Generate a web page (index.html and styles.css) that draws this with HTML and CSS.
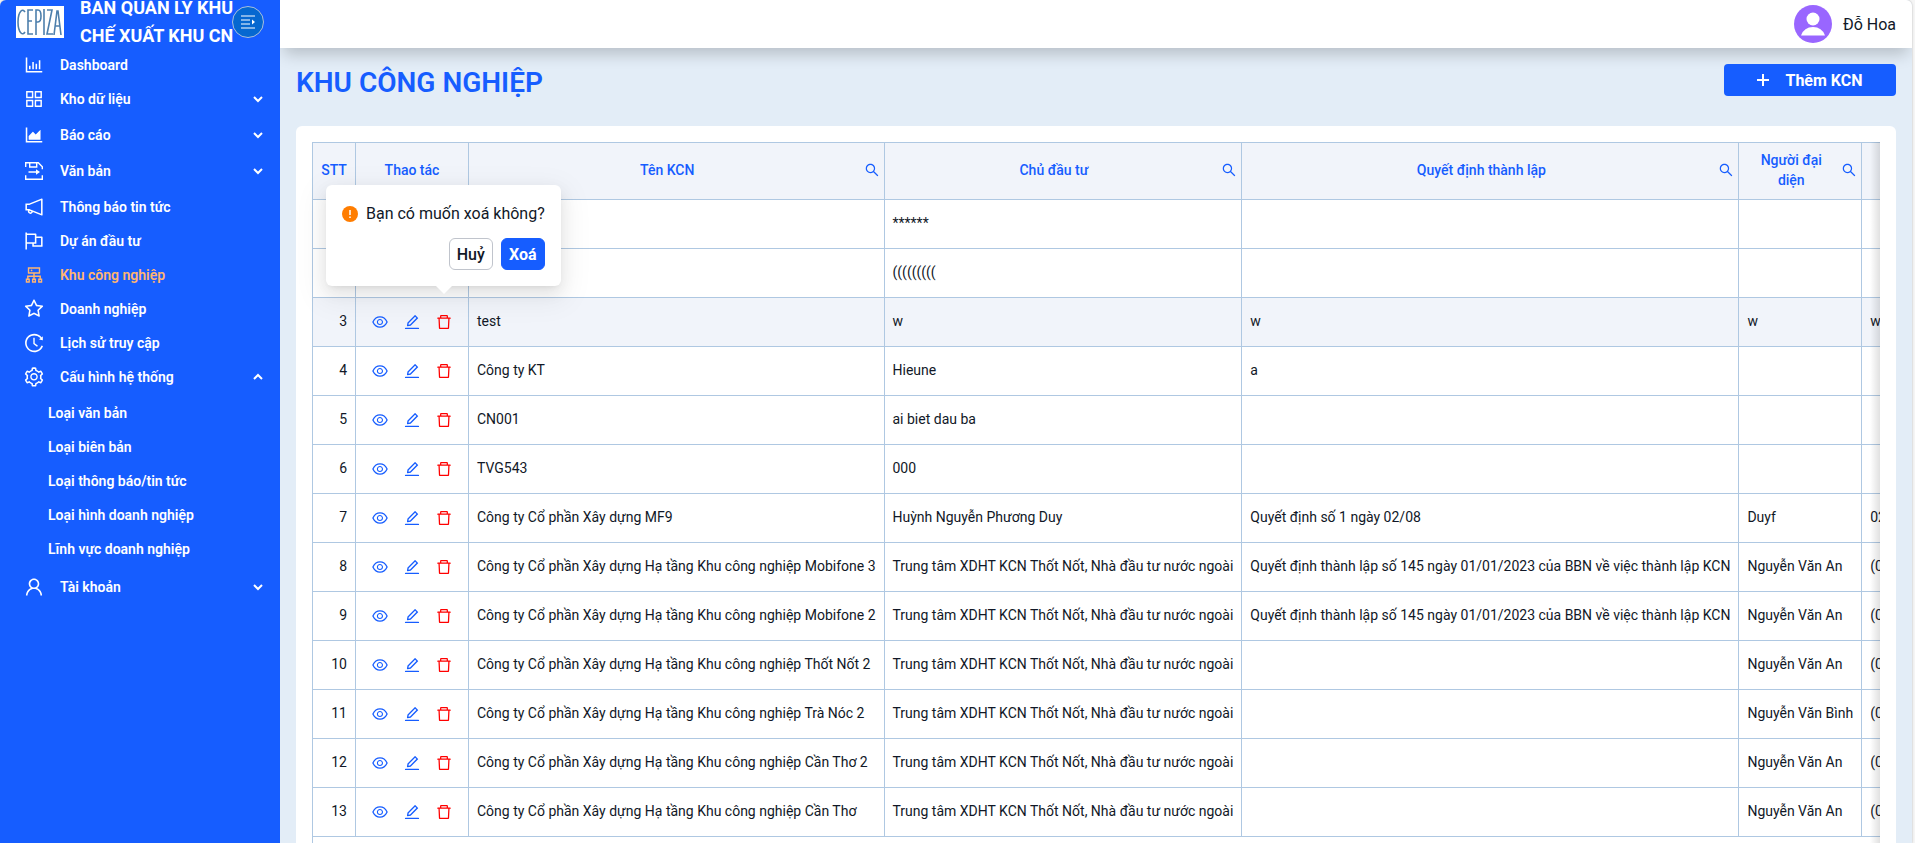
FILE: index.html
```
<!DOCTYPE html>
<html lang="vi">
<head>
    <meta charset="UTF-8">
    <meta name="viewport" content="width=device-width, initial-scale=1.0">
    <title>Khu công nghiệp</title>
    <link rel="stylesheet" href="styles.css">
</head>
<body>
    <!-- Icon set -->
    <svg class="sprite" aria-hidden="true">
        <symbol id="i-bar" viewBox="0 0 1024 1024"><path d="M888 792H200V168c0-4.400-3.600-8-8-8h-56c-4.400 0-8 3.600-8 8v688c0 4.400 3.600 8 8 8h752c4.400 0 8-3.600 8-8v-56c0-4.400-3.600-8-8-8zm-600-80h56c4.400 0 8-3.600 8-8V560c0-4.400-3.600-8-8-8h-56c-4.400 0-8 3.600-8 8v144c0 4.400 3.600 8 8 8zm152 0h56c4.400 0 8-3.600 8-8V384c0-4.400-3.600-8-8-8h-56c-4.400 0-8 3.600-8 8v320c0 4.400 3.600 8 8 8zm152 0h56c4.400 0 8-3.600 8-8V462c0-4.400-3.600-8-8-8h-56c-4.400 0-8 3.600-8 8v242c0 4.400 3.600 8 8 8zm152 0h56c4.400 0 8-3.600 8-8V304c0-4.400-3.600-8-8-8h-56c-4.400 0-8 3.600-8 8v400c0 4.400 3.600 8 8 8z"/></symbol>
        <symbol id="i-grid" viewBox="0 0 1024 1024"><path fill-rule="evenodd" d="M464 144H160c-8.800 0-16 7.200-16 16v304c0 8.800 7.200 16 16 16h304c8.800 0 16-7.200 16-16V160c0-8.800-7.200-16-16-16zm-52 268H212V212h200v200zm452-268H560c-8.800 0-16 7.200-16 16v304c0 8.800 7.200 16 16 16h304c8.800 0 16-7.200 16-16V160c0-8.800-7.200-16-16-16zm-52 268H612V212h200v200zM464 544H160c-8.800 0-16 7.200-16 16v304c0 8.800 7.200 16 16 16h304c8.800 0 16-7.200 16-16V560c0-8.800-7.200-16-16-16zm-52 268H212V612h200v200zm452-268H560c-8.800 0-16 7.200-16 16v304c0 8.800 7.200 16 16 16h304c8.800 0 16-7.200 16-16V560c0-8.800-7.200-16-16-16zm-52 268H612V612h200v200z"/></symbol>
        <symbol id="i-area" viewBox="0 0 1024 1024"><path d="M888 792H200V168c0-4.400-3.600-8-8-8h-56c-4.400 0-8 3.600-8 8v688c0 4.400 3.600 8 8 8h752c4.400 0 8-3.600 8-8v-56c0-4.400-3.600-8-8-8zm-616-64h536c4.400 0 8-3.600 8-8V284c0-7.200-8.700-10.700-13.700-5.700L592 488.600l-125.400-124a8.030 8.030 0 0 0-11.300 0l-189 189.600a7.870 7.870 0 0 0-2.300 5.600V720c0 4.400 3.600 8 8 8z"/></symbol>
        <symbol id="i-doc" viewBox="-1 -1 22 22"><g fill="none" stroke="currentColor" stroke-width="1.400"><path d="M1.700 6V1.700h12.600l4 4v2.600M1.700 14.300v4h16.600v-4M5.700 1.700v4.300h7V1.700"/><path d="M4.500 11h8"/></g><path d="M12 8.300l4 2.700-4 2.700z"/></symbol>
        <symbol id="i-horn" viewBox="0 0 1024 1024"><path fill-rule="evenodd" d="M880 112c-3.800 0-7.700.7-11.600 2.300L292 345.900H128c-8.800 0-16 7.400-16 16.600v299c0 9.200 7.200 16.600 16 16.600h101.700c-3.700 11.600-5.700 23.900-5.700 36.400 0 65.900 53.800 119.500 120 119.500 55.400 0 102.100-37.600 115.900-88.400l408.600 164.200c3.900 1.500 7.800 2.300 11.600 2.300 16.900 0 32-14.200 32-33.200V145.200C912 126.200 897 112 880 112zM344 762.300c-26.500 0-48-21.400-48-47.800 0-11.200 3.900-21.900 11-30.400l84.900 34.100c-2 24.600-22.700 44.100-47.900 44.100zm496 58.400L318.800 611.300l-12.900-5.200H184V417.900h121.900l12.900-5.200L840 203.300v617.400z"/></symbol>
        <symbol id="i-flag" viewBox="0 0 1024 1024"><path fill-rule="evenodd" d="M880 305H624V192c0-17.700-14.300-32-32-32H184v-40c0-4.400-3.600-8-8-8h-56c-4.400 0-8 3.600-8 8v784c0 4.400 3.600 8 8 8h56c4.400 0 8-3.600 8-8V640h248v113c0 17.700 14.300 32 32 32h416c17.700 0 32-14.300 32-32V337c0-17.700-14.300-32-32-32zM184 568V232h368v336H184zm656 145H504v-73h112c4.400 0 8-3.600 8-8V377h216v336z"/></symbol>
        <symbol id="i-cluster" viewBox="0 0 1024 1024"><path fill-rule="evenodd" d="M888 680h-54V540H546v-92h238c8.800 0 16-7.200 16-16V168c0-8.800-7.200-16-16-16H240c-8.800 0-16 7.200-16 16v264c0 8.800 7.200 16 16 16h238v92H190v140h-54c-4.400 0-8 3.600-8 8v176c0 4.400 3.600 8 8 8h176c4.400 0 8-3.600 8-8V688c0-4.400-3.600-8-8-8h-54v-72h220v72h-54c-4.400 0-8 3.600-8 8v176c0 4.400 3.600 8 8 8h176c4.400 0 8-3.600 8-8V688c0-4.400-3.600-8-8-8h-54v-72h220v72h-54c-4.400 0-8 3.600-8 8v176c0 4.400 3.600 8 8 8h176c4.400 0 8-3.600 8-8V688c0-4.400-3.600-8-8-8zM256 805.300c0 1.500-1.200 2.700-2.700 2.700h-58.700c-1.500 0-2.700-1.200-2.700-2.700v-58.700c0-1.500 1.200-2.700 2.700-2.700h58.700c1.500 0 2.700 1.200 2.700 2.700v58.700zm288 0c0 1.500-1.200 2.700-2.700 2.700h-58.700c-1.500 0-2.700-1.200-2.700-2.700v-58.700c0-1.500 1.200-2.700 2.700-2.700h58.700c1.500 0 2.700 1.200 2.700 2.700v58.700zM288 384V216h448v168H288zm544 421.300c0 1.500-1.200 2.700-2.700 2.700h-58.700c-1.500 0-2.700-1.200-2.700-2.700v-58.700c0-1.500 1.200-2.700 2.700-2.700h58.700c1.500 0 2.700 1.200 2.700 2.700v58.700zM360 300a40 40 0 1 0 80 0 40 40 0 1 0-80 0z"/></symbol>
        <symbol id="i-star" viewBox="0 0 1024 1024"><path fill-rule="evenodd" d="M908.100 353.100l-253.900-36.900L540.700 86.100c-3.100-6.300-8.200-11.400-14.500-14.500-15.800-7.800-35-1.300-42.900 14.500L369.800 316.200l-253.900 36.900c-7 1-13.400 4.300-18.300 9.300a32.050 32.050 0 0 0 .6 45.300l183.700 179.100-43.400 252.900a31.950 31.950 0 0 0 46.400 33.700L512 754l227.100 119.400c6.200 3.300 13.400 4.400 20.300 3.200 17.400-3 29.100-19.500 26.100-36.900l-43.400-252.900 183.700-179.100c5-4.900 8.300-11.300 9.300-18.300 2.700-17.500-9.500-33.700-27-36.300zM664.800 561.600l36.100 210.300L512 672.700 323.100 772l36.100-210.300-152.800-149L417.600 382 512 190.700 606.400 382l211.200 30.700-152.800 148.900z"/></symbol>
        <symbol id="i-history" viewBox="0 0 1024 1024"><path d="M536.100 273H488c-4.400 0-8 3.600-8 8v275.300c0 2.600 1.200 5 3.300 6.500l165.300 120.700c3.600 2.600 8.600 1.900 11.200-1.700l28.600-39c2.700-3.700 1.900-8.700-1.700-11.200L544.100 528.500V281c0-4.400-3.600-8-8-8zm219.800 75.200l156.800 38.300c5 1.200 9.900-2.600 9.900-7.700l.8-161.500c0-6.700-7.700-10.500-12.900-6.300L752.900 334.100a8 8 0 0 0 3 14.100zm167.700 301.100l-56.700-19.500a8 8 0 0 0-10.100 4.800c-1.900 5.100-3.900 10.100-6 15.100-17.800 42.100-43.300 80-75.900 112.500a353 353 0 0 1-112.500 75.900 352.180 352.180 0 0 1-137.700 27.800c-47.800 0-94.100-9.300-137.700-27.800a353 353 0 0 1-112.500-75.900c-32.500-32.500-58-70.400-75.900-112.500A353.440 353.440 0 0 1 171 512c0-47.800 9.300-94.200 27.800-137.800 17.800-42.100 43.300-80 75.900-112.500a353 353 0 0 1 112.500-75.900C430.600 167.300 477 158 524.800 158s94.100 9.300 137.700 27.800A353 353 0 0 1 775 261.700c10.200 10.300 19.800 21 28.600 32.300l59.800-46.800C784.700 146.600 662.200 81.900 524.600 82 285 82.100 92.600 276.700 95 516.400 97.400 751.900 288.900 942 524.800 942c185.500 0 343.500-117.600 403.700-282.300 1.500-4.200-.7-8.900-4.900-10.400z"/></symbol>
        <symbol id="i-gear" viewBox="0 0 1024 1024"><path fill-rule="evenodd" d="M924.800 625.700l-65.500-56c3.100-19 4.700-38.400 4.700-57.800s-1.600-38.800-4.700-57.800l65.500-56a32.030 32.030 0 0 0 9.300-35.200l-.9-2.600a443.740 443.740 0 0 0-79.700-137.900l-1.800-2.100a32.120 32.120 0 0 0-35.100-9.500l-81.300 28.900c-30-24.600-63.500-44-99.700-57.600l-15.700-85a32.050 32.050 0 0 0-25.800-25.700l-2.700-.5c-52.100-9.400-106.900-9.400-159 0l-2.700.5a32.050 32.050 0 0 0-25.800 25.700l-15.800 85.400a351.860 351.860 0 0 0-99 57.400l-81.900-29.100a32 32 0 0 0-35.100 9.500l-1.800 2.100a446.020 446.020 0 0 0-79.700 137.900l-.9 2.600c-4.500 12.500-.8 26.500 9.300 35.200l66.300 56.600c-3.100 18.800-4.600 38-4.600 57.100 0 19.200 1.500 38.400 4.600 57.100L99 625.500a32.030 32.030 0 0 0-9.300 35.200l.9 2.600c18.100 50.400 44.900 96.900 79.700 137.900l1.800 2.100a32.120 32.120 0 0 0 35.100 9.500l81.900-29.100c29.800 24.500 63.100 43.900 99 57.400l15.800 85.400a32.050 32.050 0 0 0 25.800 25.700l2.700.5a449.400 449.400 0 0 0 159 0l2.700-.5a32.050 32.050 0 0 0 25.800-25.700l15.700-85a350 350 0 0 0 99.700-57.600l81.300 28.900a32 32 0 0 0 35.100-9.500l1.800-2.100c34.800-41.100 61.600-87.500 79.700-137.900l.9-2.600c4.500-12.300.8-26.300-9.300-35zM788.300 465.900c2.500 15.100 3.800 30.600 3.800 46.100s-1.300 31-3.800 46.100l-6.600 40.100 74.700 63.900a370.030 370.030 0 0 1-42.600 73.600L721 702.800l-31.400 25.800c-23.900 19.600-50.500 35-79.300 45.800l-38.100 14.300-17.900 97a377.500 377.500 0 0 1-85 0l-17.900-97.200-37.800-14.500c-28.500-10.800-55-26.200-78.700-45.700l-31.400-25.900-93.400 33.200c-17-22.900-31.200-47.600-42.600-73.600l75.500-64.500-6.500-40c-2.400-14.900-3.700-30.300-3.700-45.500 0-15.300 1.200-30.600 3.700-45.500l6.500-40-75.500-64.500c11.300-26.100 25.600-50.700 42.600-73.600l93.400 33.200 31.400-25.900c23.700-19.500 50.200-34.900 78.700-45.700l37.900-14.300 17.900-97.200c28.100-3.200 56.800-3.200 85 0l17.900 97 38.100 14.300c28.700 10.800 55.400 26.200 79.300 45.800l31.400 25.800 92.800-32.900c17 22.900 31.200 47.600 42.600 73.600L781.800 426l6.500 39.900zM512 326c-97.200 0-176 78.800-176 176s78.800 176 176 176 176-78.800 176-176-78.800-176-176-176zm79.200 255.200A111.600 111.600 0 0 1 512 614c-29.900 0-58-11.700-79.200-32.800A111.600 111.600 0 0 1 400 502c0-29.900 11.700-58 32.800-79.200C454 401.600 482.100 390 512 390c29.900 0 58 11.600 79.200 32.800A111.600 111.600 0 0 1 624 502c0 29.900-11.700 58-32.800 79.200z"/></symbol>
        <symbol id="i-user" viewBox="0 0 1024 1024"><path fill-rule="evenodd" d="M858.500 763.600a374 374 0 0 0-80.600-119.500 375.630 375.630 0 0 0-119.500-80.600c-.4-.2-.8-.3-1.200-.5C719.500 518 760 444.700 760 362c0-137-111-248-248-248S264 225 264 362c0 82.700 40.500 156 102.800 201.100-.4.200-.8.300-1.200.5-44.800 18.900-85 46-119.500 80.600a375.630 375.630 0 0 0-80.600 119.500A371.700 371.700 0 0 0 136 901.800a8 8 0 0 0 8 8.200h60c4.400 0 7.900-3.500 8-7.800 2-77.200 33-149.500 87.800-204.300 56.700-56.700 132-87.900 212.200-87.900s155.500 31.200 212.200 87.900C779 752.700 810 825 812 902.200c.1 4.400 3.600 7.800 8 7.800h60a8 8 0 0 0 8-8.200c-1-47.800-10.900-94.300-29.500-138.200zM512 534c-45.900 0-89.100-17.900-121.600-50.400S340 407.900 340 362c0-45.900 17.900-89.100 50.400-121.600S466.100 190 512 190s89.100 17.900 121.600 50.400S684 316.100 684 362c0 45.900-17.900 89.100-50.400 121.600S557.900 534 512 534z"/></symbol>
        <symbol id="i-down" viewBox="0 0 10 10"><path d="M1 3l4 4 4-4" fill="none" stroke="currentColor" stroke-width="2"/></symbol>
        <symbol id="i-up" viewBox="0 0 10 10"><path d="M1 7l4-4 4 4" fill="none" stroke="currentColor" stroke-width="2"/></symbol>
        <symbol id="i-search" viewBox="0 0 1024 1024"><path fill-rule="evenodd" d="M909.600 854.500L649.900 594.800C690.200 542.700 712 479 712 412c0-80.200-31.300-155.400-87.900-212.100-56.600-56.700-132-87.900-212.100-87.900s-155.500 31.300-212.100 87.900C143.200 256.500 112 331.800 112 412c0 80.100 31.300 155.500 87.900 212.100C256.500 680.800 331.800 712 412 712c67 0 130.600-21.800 182.700-62l259.700 259.600a8.200 8.200 0 0 0 11.600 0l43.600-43.500a8.200 8.200 0 0 0 0-11.600zM570.400 570.400C528 612.700 471.800 636 412 636s-116-23.300-158.400-65.600C211.300 528 188 471.800 188 412s23.300-116.100 65.600-158.400C296 211.300 352.200 188 412 188s116.100 23.200 158.400 65.600S636 352.200 636 412s-23.300 116.100-65.600 158.400z"/></symbol>
        <symbol id="i-eye" viewBox="0 0 1024 1024"><path fill-rule="evenodd" d="M942.200 486.200C847.400 286.500 704.100 186 512 186c-192.200 0-335.400 100.500-430.200 300.300a60.300 60.300 0 0 0 0 51.500C176.600 737.500 319.900 838 512 838c192.200 0 335.400-100.500 430.200-300.300 7.700-16.200 7.700-35 0-51.500zM512 766c-161.300 0-279.400-81.800-362.700-254C232.600 339.800 350.700 258 512 258c161.300 0 279.400 81.800 362.700 254C791.500 684.200 673.400 766 512 766zm-4-430c-97.200 0-176 78.800-176 176s78.800 176 176 176 176-78.800 176-176-78.800-176-176-176zm0 288c-61.900 0-112-50.100-112-112s50.100-112 112-112 112 50.100 112 112-50.100 112-112 112z"/></symbol>
        <symbol id="i-edit" viewBox="0 0 1024 1024"><path fill-rule="evenodd" d="M257.700 752c2 0 4-.2 6-.5L431.900 722c2-.4 3.900-1.300 5.300-2.800l423.900-423.900a9.960 9.960 0 0 0 0-14.100L694.900 114.900c-1.900-1.900-4.400-2.900-7.100-2.900s-5.200 1-7.100 2.900L256.800 538.800c-1.500 1.500-2.400 3.300-2.800 5.300l-29.500 168.200a33.500 33.500 0 0 0 9.400 29.800c6.600 6.400 14.900 9.900 23.800 9.900zm67.400-174.400L687.800 215l73.300 73.300-362.700 362.600-88.900 15.700 15.600-89zM880 836H144c-17.700 0-32 14.300-32 32v36c0 4.400 3.600 8 8 8h784c4.400 0 8-3.600 8-8v-36c0-17.700-14.300-32-32-32z"/></symbol>
        <symbol id="i-trash" viewBox="0 0 1024 1024"><path fill-rule="evenodd" d="M360 184h-8c4.400 0 8-3.600 8-8v8h304v-8c0 4.400 3.600 8 8 8h-8v72h72v-80c0-35.300-28.700-64-64-64H352c-35.300 0-64 28.700-64 64v80h72v-72zm504 72H160c-17.700 0-32 14.300-32 32v32c0 4.400 3.600 8 8 8h60.400l24.700 523c1.600 34.100 29.800 61 63.900 61h454c34.200 0 62.300-26.800 63.900-61l24.700-523H888c4.400 0 8-3.600 8-8v-32c0-17.700-14.300-32-32-32zM731.300 840H292.700l-24.200-512h487l-24.200 512z"/></symbol>
    </svg>

    <div class="layout">
        <aside class="sidebar">
            <div class="brand">
                <svg class="brand-logo" viewBox="0 0 48 32" role="img" aria-label="CEPIZA">
                    <rect width="48" height="32" fill="#fff"/>
                    <g fill="none" stroke="#4d7fac" stroke-width="1.600">
                        <path d="M9 6Q7 3 5 5Q2 8 2 16T5 27Q7 29 9 26"/>
                        <path d="M17 4h-5v24h5M12 15h4"/>
                        <path d="M20 29V4h2q3 0 3 6t-3 6h-2"/>
                        <path d="M28 3v26"/>
                        <path d="M31 4h5l-5 24h6"/>
                        <path d="M38 29l3-24h1l3 24M39 20h5"/>
                    </g>
                </svg>
                <div class="brand-name">BAN QUẢN LÝ KHU CHẾ XUẤT KHU CN</div>
                <button class="collapse-btn" aria-label="Thu gọn menu">
                    <svg viewBox="0 0 16 16"><path d="M1 2h14M1 6h9M1 10h9M1 14h14" fill="none" stroke="currentColor" stroke-width="1.200"/><path d="M12 5.500l3 2.500-3 2.500z"/></svg>
                </button>
            </div>
            <nav class="menu">
                <a class="menu-item" href="#"><svg class="icon"><use href="#i-bar"/></svg>Dashboard</a>
                <a class="menu-item has-sub" href="#"><svg class="icon"><use href="#i-grid"/></svg>Kho dữ liệu<svg class="arrow"><use href="#i-down"/></svg></a>
                <a class="menu-item has-sub" href="#"><svg class="icon"><use href="#i-area"/></svg>Báo cáo<svg class="arrow"><use href="#i-down"/></svg></a>
                <a class="menu-item has-sub" href="#"><svg class="icon"><use href="#i-doc"/></svg>Văn bản<svg class="arrow"><use href="#i-down"/></svg></a>
                <a class="menu-item" href="#"><svg class="icon"><use href="#i-horn"/></svg>Thông báo tin tức</a>
                <a class="menu-item" href="#"><svg class="icon"><use href="#i-flag"/></svg>Dự án đầu tư</a>
                <a class="menu-item active" href="#"><svg class="icon"><use href="#i-cluster"/></svg>Khu công nghiệp</a>
                <a class="menu-item" href="#"><svg class="icon"><use href="#i-star"/></svg>Doanh nghiệp</a>
                <a class="menu-item" href="#"><svg class="icon"><use href="#i-history"/></svg>Lịch sử truy cập</a>
                <a class="menu-item has-sub" href="#"><svg class="icon"><use href="#i-gear"/></svg>Cấu hình hệ thống<svg class="arrow"><use href="#i-up"/></svg></a>
                <div class="submenu">
                    <a class="menu-item" href="#">Loại văn bản</a>
                    <a class="menu-item" href="#">Loại biên bản</a>
                    <a class="menu-item" href="#">Loại thông báo/tin tức</a>
                    <a class="menu-item" href="#">Loại hình doanh nghiệp</a>
                    <a class="menu-item" href="#">Lĩnh vực doanh nghiệp</a>
                </div>
                <a class="menu-item has-sub" href="#"><svg class="icon"><use href="#i-user"/></svg>Tài khoản<svg class="arrow"><use href="#i-down"/></svg></a>
            </nav>
        </aside>

        <div class="main">
            <header class="topbar">
                <svg class="avatar" viewBox="0 0 38 38"><circle cx="19" cy="19" r="19" fill="#9966ff"/><circle cx="19" cy="14" r="6.500" fill="#fff"/><path d="M7 30.500Q10 22 19 22t12 8.500z" fill="#fff"/></svg>
                <span>Đỗ Hoa</span>
            </header>

            <main class="content">
                <div class="page-head">
                    <h1>KHU CÔNG NGHIỆP</h1>
                    <button class="add-btn"><svg viewBox="0 0 12 12"><path d="M6 0v12M0 6h12" stroke="currentColor" stroke-width="2"/></svg>Thêm KCN</button>
                </div>

                <section class="card">
                    <div class="table-wrap">
                        <table>
                            <thead>
                                <tr>
                                    <th class="col-stt">STT</th>
                                    <th class="col-action">Thao tác</th>
                                    <th><div class="th-search"><span>Tên KCN</span><button aria-label="Tìm tên KCN"><svg><use href="#i-search"/></svg></button></div></th>
                                    <th><div class="th-search"><span>Chủ đầu tư</span><button aria-label="Tìm chủ đầu tư"><svg><use href="#i-search"/></svg></button></div></th>
                                    <th><div class="th-search"><span>Quyết định thành lập</span><button aria-label="Tìm quyết định"><svg><use href="#i-search"/></svg></button></div></th>
                                    <th><div class="th-search"><span>Người đại<br>diện</span><button aria-label="Tìm người đại diện"><svg><use href="#i-search"/></svg></button></div></th>
                                    <th class="col-phone"></th>
                                </tr>
                            </thead>
                            <tbody id="rows"></tbody>
                        </table>
                    </div>

                    <div class="popconfirm" role="dialog" aria-label="Xác nhận xoá">
                        <div class="popconfirm-text">
                            <svg viewBox="0 0 16 16"><circle cx="8" cy="8" r="8" fill="#ff7d00"/><path d="M8 4v5M8 10.500v1.500" stroke="#fff" stroke-width="1.500"/></svg>
                            Bạn có muốn xoá không?
                        </div>
                        <div class="popconfirm-actions">
                            <button>Huỷ</button>
                            <button class="primary">Xoá</button>
                        </div>
                    </div>
                </section>
            </main>
        </div>
    </div>

    <script>
        const investor = 'Trung tâm XDHT KCN Thốt Nốt, Nhà đầu tư nước ngoài';
        const decision = 'Quyết định thành lập số 145 ngày 01/01/2023 của BBN về việc thành lập KCN';
        const company = 'Công ty Cổ phần Xây dựng Hạ tầng Khu công nghiệp ';

        const rows = [
            ['', '******', '', '', ''],
            ['', '(((((((((', '', '', ''],
            ['test', 'w', 'w', 'w', 'w'],
            ['Công ty KT', 'Hieune', 'a', '', ''],
            ['CN001', 'ai biet dau ba', '', '', ''],
            ['TVG543', '000', '', '', ''],
            ['Công ty Cổ phần Xây dựng MF9', 'Huỳnh Nguyễn Phương Duy', 'Quyết định số 1 ngày 02/08', 'Duyf', '02'],
            [company + 'Mobifone 3', investor, decision, 'Nguyễn Văn An', '(0'],
            [company + 'Mobifone 2', investor, decision, 'Nguyễn Văn An', '(0'],
            [company + 'Thốt Nốt 2', investor, '', 'Nguyễn Văn An', '(0'],
            [company + 'Trà Nóc 2', investor, '', 'Nguyễn Văn Bình', '(0'],
            [company + 'Cần Thơ 2', investor, '', 'Nguyễn Văn An', '(0'],
            [company + 'Cần Thơ', investor, '', 'Nguyễn Văn An', '(0']
        ];

        const actions = `<div class="actions">
            <button aria-label="Xem"><svg><use href="#i-eye"/></svg></button>
            <button aria-label="Sửa"><svg><use href="#i-edit"/></svg></button>
            <button class="danger" aria-label="Xoá"><svg><use href="#i-trash"/></svg></button>
        </div>`;

        document.getElementById('rows').innerHTML = rows.map((row, i) => `
            <tr class="${i === 2 ? 'hover' : ''}">
                <td class="stt">${i + 1}</td>
                <td>${actions}</td>
                ${row.map(cell => `<td>${cell}</td>`).join('')}
            </tr>`).join('');
    </script>
</body>
</html>
```
FILE: styles.css
```
* {
    box-sizing: border-box;
}
body {
    margin: 0;
    font-family: Roboto, "Liberation Sans", sans-serif;
    font-size: 14px;
    color: #111827;
    background-color: #f5f5f5;
}
button {
    font-family: inherit;
    cursor: pointer;
}
svg {
    fill: currentColor;
}
.sprite {
    display: none;
}
.layout {
    display: flex;
    height: 100vh;
    overflow: hidden;
    margin-right: 3px;
    border-radius: 6px 6px 0 0;
    background-color: #e3edf7;
    box-shadow: 0 0 2px rgba(0, 0, 0, 0.3);
}

/* Sidebar */
.sidebar {
    position: relative;
    z-index: 1;
    flex: 0 0 280px;
    background-color: #165dff;
    color: #fff;
}
.brand {
    display: flex;
    align-items: center;
    gap: 16px;
    height: 44px;
    padding: 0 32px 0 16px;
    position: relative;
}
.brand-logo {
    flex: none;
    width: 48px;
    height: 32px;
}
.brand-name {
    width: 168px;
    font-size: 18px;
    font-weight: 700;
    line-height: 28px;
}
.collapse-btn {
    position: absolute;
    top: 6px;
    right: 16px;
    display: flex;
    align-items: center;
    justify-content: center;
    width: 32px;
    height: 32px;
    padding: 0;
    border: 1px solid #a9bfdc;
    border-radius: 50%;
    color: #fff;
    background-color: #0668d0;
}
.collapse-btn svg {
    width: 16px;
    height: 16px;
}
.menu {
    padding-top: 4px;
}
.menu-item {
    display: flex;
    align-items: center;
    height: 34px;
    padding: 0 17px 0 23px;
    color: #fff;
    font-weight: 600;
    text-decoration: none;
}
.menu-item.has-sub {
    margin-bottom: 2px;
}
.menu-item.active {
    color: #ffb571;
}
.menu-item .icon {
    width: 22px;
    height: 22px;
    margin-right: 15px;
}
.menu-item .arrow {
    width: 10px;
    height: 10px;
    margin-left: auto;
}
.submenu {
    margin-bottom: 4px;
}
.submenu .menu-item {
    padding-left: 48px;
}

/* Main area */
.main {
    flex: 1;
    min-width: 0;
}
.topbar {
    display: flex;
    align-items: center;
    justify-content: flex-end;
    gap: 11px;
    height: 48px;
    padding: 0 16px;
    font-size: 16px;
    background-color: #fff;
    box-shadow: 0 10px 16px -4px rgba(0, 0, 0, 0.2);
}
.avatar {
    width: 38px;
    height: 38px;
}
.content {
    padding: 16px;
}
.page-head {
    display: flex;
    justify-content: space-between;
    align-items: flex-start;
    height: 62px;
}
h1 {
    margin: 0;
    font-size: 28px;
    font-weight: 600;
    line-height: 38px;
    color: #165dff;
}
.add-btn {
    display: flex;
    align-items: center;
    justify-content: center;
    gap: 16px;
    width: 172px;
    height: 32px;
    border: 0;
    border-radius: 4px;
    color: #fff;
    font-size: 16px;
    font-weight: 700;
    background-color: #165dff;
}
.add-btn svg {
    width: 12px;
    height: 12px;
}

/* Table */
.card {
    position: relative;
    padding: 16px;
    border-radius: 6px;
    background-color: #fff;
}
.table-wrap {
    position: relative;
    overflow: hidden;
    padding-bottom: 16px;
    border-left: 1px solid #afc8e2;
}
.table-wrap::after {
    content: "";
    position: absolute;
    top: 0;
    bottom: 0;
    right: 0;
    width: 10px;
    background: linear-gradient(to left, rgba(0, 0, 0, 0.12), rgba(0, 0, 0, 0));
}
table {
    border-collapse: separate;
    border-spacing: 0;
    border-top: 1px solid #afc8e2;
}
th,
td {
    height: 49px;
    padding: 0 8px 2px;
    border-right: 1px solid #afc8e2;
    border-bottom: 1px solid #afc8e2;
    line-height: 20px;
    white-space: nowrap;
}
th {
    height: 57px;
    color: #165dff;
    font-weight: 500;
    background-color: #f1f4fa;
}
.col-stt {
    min-width: 43px;
}
.col-action {
    min-width: 113px;
}
.col-phone {
    min-width: 160px;
}
.th-search {
    display: flex;
    align-items: center;
    gap: 6px;
}
.th-search span {
    flex: 1;
}
.th-search button {
    display: flex;
    margin-right: -4px;
    padding: 0;
    border: 0;
    color: #165dff;
    background: none;
}
.th-search svg {
    width: 16px;
    height: 16px;
}
tr.hover td {
    background-color: #f1f4fa;
}
.stt {
    text-align: right;
}
.actions {
    display: flex;
    justify-content: center;
    gap: 14px;
    padding-top: 2px;
}
.actions button {
    display: flex;
    padding: 0;
    border: 0;
    color: #165dff;
    background: none;
}
.actions .danger {
    color: #ff0000;
}
.actions svg {
    width: 18px;
    height: 18px;
}

/* Delete confirmation */
.popconfirm {
    position: absolute;
    top: 59px;
    left: 30px;
    padding: 16px;
    border-radius: 6px;
    font-size: 16px;
    background-color: #fff;
    box-shadow: 0 6px 16px rgba(0, 0, 0, 0.08), 0 3px 6px -4px rgba(0, 0, 0, 0.12), 0 9px 28px 8px rgba(0, 0, 0, 0.05);
}
.popconfirm::after {
    content: "";
    position: absolute;
    top: 100%;
    left: 110px;
    border: 8px solid transparent;
    border-top-color: #fff;
    border-bottom: 0;
}
.popconfirm-text {
    display: flex;
    align-items: center;
    gap: 8px;
    line-height: 26px;
    margin-bottom: 11px;
    white-space: nowrap;
}
.popconfirm-text svg {
    width: 16px;
    height: 16px;
}
.popconfirm-actions {
    display: flex;
    justify-content: flex-end;
    gap: 8px;
}
.popconfirm-actions button {
    width: 44px;
    height: 32px;
    padding: 0;
    border: 1px solid #c0c4cc;
    border-radius: 6px;
    font-size: 16px;
    font-weight: 500;
    color: #111827;
    background-color: #fff;
}
.popconfirm-actions .primary {
    border-color: #165dff;
    font-weight: 700;
    color: #fff;
    background-color: #165dff;
}
```
